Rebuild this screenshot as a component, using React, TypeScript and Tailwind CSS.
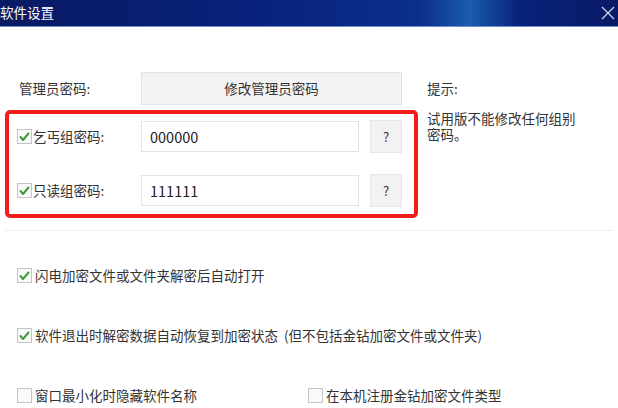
import React from 'react';

const font = { fontFamily: '"Noto Sans CJK SC", "Noto Sans", sans-serif' };

const Check = ({ checked }: { checked: boolean }) => (
  <span className="w-[15px] h-[15px] border border-[#c4c4c4] bg-[#fafafa] flex items-center justify-center shrink-0">
    {checked && (
      <svg width="13" height="13" viewBox="0 0 13 13">
        <path d="M2.5 7 L5 10 L10.5 3.5" fill="none" stroke="#3f9a3a" strokeWidth="2" strokeLinecap="round" strokeLinejoin="round" />
      </svg>
    )}
  </span>
);

const PwdRow = ({ label, value }: { label: string; value: string }) => (
  <div className="flex items-center h-[33px]">
    <div className="w-[124px] flex items-center gap-[1px]">
      <Check checked />
      <span className="text-[13.5px] text-[#333]">{label}</span>
    </div>
    <div className="w-[218px] h-[31px] border border-[#e3e3e3] bg-white flex items-center pl-[8px] text-[14.5px] text-[#222]">
      {value}
    </div>
    <div className="ml-[11px] w-[32px] h-[33px] bg-[#f2f2f2] border border-[#e6e6e6] flex items-center justify-center text-[13px] text-[#333]">
      ?
    </div>
  </div>
);

const Option = ({ checked, label }: { checked: boolean; label: string }) => (
  <div className="flex items-center gap-[3px] h-[20px]">
    <Check checked={checked} />
    <span className="text-[13.5px] leading-[20px] text-[#333] whitespace-pre">{label}</span>
  </div>
);

export default function App() {
  return (
    <div className="w-[618px] h-[408px] bg-white overflow-hidden" style={font}>
      <div className="h-[27px] border-b border-[#6f8fd2] bg-[linear-gradient(90deg,#0a1a63_0%,#08217a_40%,#0b2f8c_68%,#1a5cae_76%,#072279_84%,#0a1a66_100%)] flex items-center justify-between pr-[3px]">
        <span className="text-[13.5px] text-white leading-none">软件设置</span>
        <svg width="14" height="14" viewBox="0 0 14 14">
          <path d="M1 1 L13 13 M13 1 L1 13" stroke="#d5dcf0" strokeWidth="1.1" />
        </svg>
      </div>

      <div className="flex px-[5px] pt-[45px]">
        <div className="w-[413px] flex flex-col">
          <div className="flex items-center h-[33px]">
            <span className="w-[136px] pl-[14px] text-[13.5px] text-[#333]">管理员密码:</span>
            <div className="w-[261px] h-[33px] bg-[#f3f3f3] border border-[#e2e2e2] flex items-center justify-center text-[13.5px] text-[#333]">
              修改管理员密码
            </div>
          </div>
          <div className="mt-[5px] border-4 border-[#f21c1c] rounded-[5px] pl-[8px] pt-[6px] pb-[7px] flex flex-col gap-[21px]">
            <PwdRow label="乞丐组密码:" value="000000" />
            <PwdRow label="只读组密码:" value="111111" />
          </div>
        </div>
        <div className="ml-[9px] flex flex-col text-[13.5px] text-[#333]">
          <div className="h-[33px] flex items-center">提示:</div>
          <p className="mt-[5px] w-[152px] leading-[16px]">试用版不能修改任何组别密码。</p>
        </div>
      </div>

      <div className="mx-[5px] mt-[12px] border-t border-[#efefef]" />

      <div className="flex flex-col pl-[17px] pt-[34px] gap-[40px]">
        <Option checked label="闪电加密文件或文件夹解密后自动打开" />
        <Option checked label="软件退出时解密数据自动恢复到加密状态  (但不包括金钻加密文件或文件夹)" />
        <div className="flex">
          <div className="w-[291px]">
            <Option checked={false} label="窗口最小化时隐藏软件名称" />
          </div>
          <Option checked={false} label="在本机注册金钻加密文件类型" />
        </div>
      </div>
    </div>
  );
}
